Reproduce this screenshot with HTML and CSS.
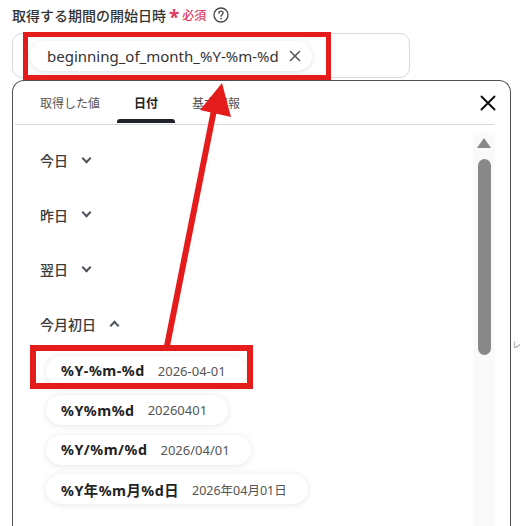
FILE: index.html
```html
<!DOCTYPE html>
<html lang="ja">
<head>
    <meta charset="UTF-8">
    <title>開始日時</title>
    <link rel="stylesheet" href="styles.css">
</head>
<body>
    <div class="page">
        <div class="field">
            <div class="label-row">
                <span class="label">取得する期間の開始日時</span>
                <span class="req"><span class="star">*</span>必須</span>
                <svg class="help" width="16" height="16" viewBox="0 0 16 16">
                    <circle cx="8" cy="8" r="7" fill="none" stroke="#444" stroke-width="1.3"/>
                    <path d="M5.9 6.2c0-1.2 1-2 2.1-2s2.1.8 2.1 1.9c0 1.5-2.1 1.6-2.1 3.1" fill="none" stroke="#444" stroke-width="1.3" stroke-linecap="round"/>
                    <circle cx="8" cy="11.6" r=".85" fill="#444"/>
                </svg>
            </div>

            <div class="input">
                <span class="tag">
                    beginning_of_month_%Y-%m-%d
                    <svg class="tag-x" width="12" height="12" viewBox="0 0 12 12">
                        <path d="M1.5 1.5l9 9M10.5 1.5l-9 9" stroke="#555" stroke-width="1.5" stroke-linecap="round"/>
                    </svg>
                </span>
            </div>

            <div class="panel">
                <div class="tabs-row">
                    <div class="tab">取得した値</div>
                    <div class="tab active">日付</div>
                    <div class="tab">基本情報</div>
                    <button class="close">
                        <svg width="16" height="16" viewBox="0 0 16 16">
                            <path d="M1.5 1.5l13 13M14.5 1.5l-13 13" stroke="#111" stroke-width="2" stroke-linecap="round"/>
                        </svg>
                    </button>
                </div>
                <div class="divider"></div>

                <div class="panel-body">
                    <div class="list">
                        <div class="group">今日 <span class="chev down"></span></div>
                        <div class="group">昨日 <span class="chev down"></span></div>
                        <div class="group">翌日 <span class="chev down"></span></div>
                        <div class="group">今月初日 <span class="chev up"></span></div>

                        <div class="options">
                            <div class="opt"><b>%Y-%m-%d</b><span>2026-04-01</span></div>
                            <div class="opt"><b>%Y%m%d</b><span>20260401</span></div>
                            <div class="opt"><b>%Y/%m/%d</b><span>2026/04/01</span></div>
                            <div class="opt"><b>%Y年%m月%d日</b><span class="cjk-date">2026年04月01日</span></div>
                        </div>
                    </div>

                    <div class="scrollbar">
                        <span class="scroll-up"></span>
                        <span class="thumb"></span>
                    </div>
                </div>
            </div>
        </div>

        <div class="aside">レス</div>

        <svg class="annot" width="520" height="526" viewBox="0 0 520 526">
            <rect x="25.5" y="34.5" width="303" height="43" fill="none" stroke="#e41c1c" stroke-width="5"/>
            <rect x="33" y="348" width="217" height="38" fill="none" stroke="#e41c1c" stroke-width="6"/>
            <line x1="167" y1="346" x2="214" y2="110" stroke="#e41c1c" stroke-width="6"/>
            <polygon points="222,83 200,110 231,117" fill="#e41c1c"/>
        </svg>
    </div>
</body>
</html>
```

FILE: styles.css
```css
* {
    margin: 0;
    padding: 0;
    box-sizing: border-box;
}

body {
    font-family: 'Noto Sans', 'Noto Sans CJK JP', sans-serif;
    background: #ffffff;
    color: #333;
}

.page {
    position: relative;
    display: flex;
    width: 520px;
    height: 526px;
    padding-left: 12px;
    overflow: hidden;
}

.field {
    width: 499px;
    flex-shrink: 0;
}

.label-row {
    display: flex;
    align-items: center;
    height: 22px;
    margin-top: 4px;
}

.label {
    font-size: 14px;
    font-weight: 500;
    color: #333;
}

.req {
    display: flex;
    align-items: center;
    margin-left: 3px;
    font-size: 12px;
    font-weight: 500;
    color: #e23b60;
}

.star {
    font-size: 19px;
    font-weight: 700;
    line-height: 1;
    margin: 5px 3px 0 0;
}

.help {
    margin-left: 7px;
}

.input {
    display: flex;
    align-items: center;
    width: 398px;
    height: 45px;
    margin-top: 7px;
    padding-left: 17px;
    border: 1px solid #d5d9e0;
    border-radius: 10px;
}

.tag {
    display: inline-flex;
    align-items: center;
    height: 30px;
    padding: 0 11px 0 17px;
    border-radius: 15px;
    font-size: 15px;
    color: #333;
    background: #fff;
    box-shadow: 0 1px 5px rgba(0, 0, 0, 0.13);
}

.tag-x {
    margin-left: 10px;
}

.panel {
    height: 460px;
    margin-top: 2px;
    border: 1px solid #4b505a;
    border-bottom: none;
    border-radius: 12px 12px 0 0;
}

.tabs-row {
    display: flex;
    align-items: stretch;
    height: 43px;
    padding-left: 10px;
}

.tab {
    position: relative;
    display: flex;
    align-items: center;
    padding: 0 17px;
    font-size: 12px;
    color: #555;
}

.tab.active {
    font-weight: 700;
    color: #222;
}

.tab.active::after {
    content: '';
    position: absolute;
    left: 0;
    right: 0;
    bottom: 1px;
    height: 4px;
    border-radius: 3px 3px 0 0;
    background: #1f2329;
}

.close {
    display: flex;
    align-items: center;
    margin-left: auto;
    margin-right: 14px;
    border: none;
    background: none;
}

.divider {
    height: 1px;
    margin: 0 16px 0 2px;
    background: #d3d6dc;
}

.panel-body {
    display: flex;
}

.list {
    flex: 1;
    padding: 24px 0 0 27px;
}

.group {
    display: flex;
    align-items: center;
    height: 22px;
    margin-bottom: 32.5px;
    font-size: 14px;
    font-weight: 500;
    color: #3a3a3a;
}

.group:nth-child(4) {
    margin-bottom: 21px;
}

.chev {
    width: 7px;
    height: 7px;
    margin-left: 15px;
    border-right: 2px solid #4e545e;
    border-bottom: 2px solid #4e545e;
}

.chev.down {
    transform: translateY(-2px) rotate(45deg);
}

.chev.up {
    transform: translateY(2px) rotate(-135deg);
}

.options {
    display: flex;
    flex-direction: column;
    align-items: flex-start;
    gap: 9.5px;
    padding-left: 6px;
}

.opt {
    display: flex;
    align-items: center;
    height: 30px;
    padding: 0 21px 0 15px;
    border-radius: 15px;
    background: #fff;
    box-shadow: 0 1px 7px rgba(0, 0, 0, 0.1);
}

.opt b {
    font-size: 14.3px;
    font-weight: 700;
    letter-spacing: 0.5px;
    color: #222;
}

.opt span {
    margin-left: 13px;
    font-size: 13px;
    color: #555;
}

.opt .cjk-date {
    font-size: 12.5px;
}

.scrollbar {
    display: flex;
    flex-direction: column;
    align-items: center;
    width: 22px;
    height: 400px;
    margin: 7px 15px 0 0;
    background: #fafafa;
}

.scroll-up {
    width: 0;
    height: 0;
    margin-top: 6px;
    border-left: 7px solid transparent;
    border-right: 7px solid transparent;
    border-bottom: 10px solid #888;
}

.thumb {
    width: 13px;
    height: 196px;
    margin-top: 11px;
    border-radius: 7px;
    background: #888;
}

.aside {
    margin-top: 338px;
    padding-left: 1px;
    font-size: 9px;
    color: #999;
    white-space: nowrap;
}

.annot {
    position: absolute;
    top: 0;
    left: 0;
    pointer-events: none;
}
```
